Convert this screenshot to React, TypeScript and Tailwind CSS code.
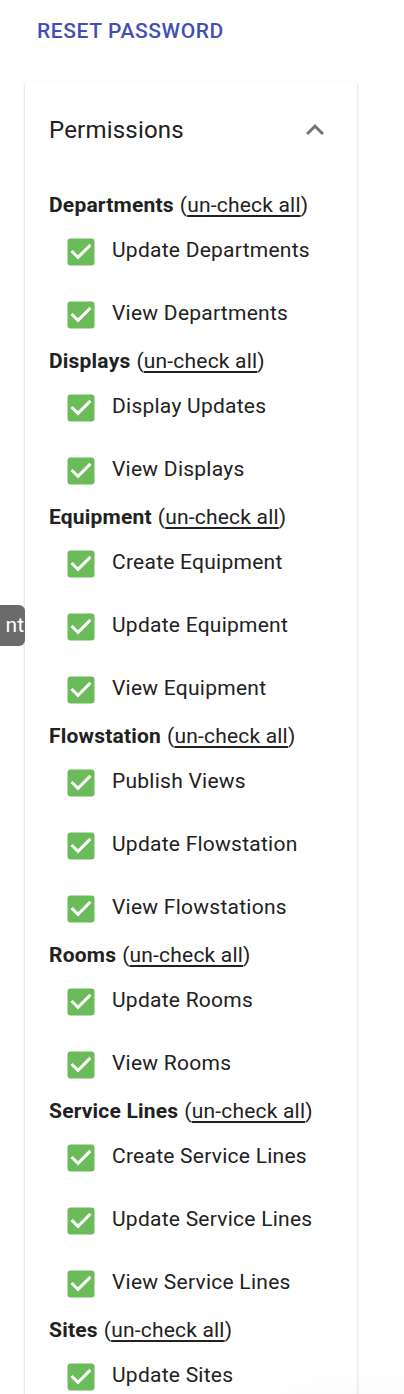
import React from "react";

interface Group {
  readonly name: string;
  readonly items: readonly string[];
}

const groups: Group[] = [
  { name: "Departments", items: ["Update Departments", "View Departments"] },
  { name: "Displays", items: ["Display Updates", "View Displays"] },
  { name: "Equipment", items: ["Create Equipment", "Update Equipment", "View Equipment"] },
  { name: "Flowstation", items: ["Publish Views", "Update Flowstation", "View Flowstations"] },
  { name: "Rooms", items: ["Update Rooms", "View Rooms"] },
  { name: "Service Lines", items: ["Create Service Lines", "Update Service Lines", "View Service Lines"] },
  { name: "Sites", items: ["Update Sites"] },
];

function CheckedBox() {
  return (
    <svg viewBox="0 0 24 24" className="h-[36px] w-[36px] shrink-0">
      <rect x="3" y="3" width="18" height="18" rx="2" fill="#6cbb5b" />
      <path d="M10 17l-5-5 1.41-1.41L10 14.17l7.59-7.59L19 8l-9 9z" fill="#ffffff" />
    </svg>
  );
}

export default function App() {
  return (
    <div className="relative min-h-[1394px] overflow-hidden bg-white font-['Roboto',sans-serif] text-[#212121]">
      <div className="flex h-[60px] items-center pl-[37px] pt-[3px]">
        <span className="text-[21px] font-medium uppercase tracking-[0.6px] text-[#3f51b5]">
          Reset password
        </span>
      </div>

      <div className="mt-[22px] flex">
        <div className="relative w-[25px]">
          <div className="absolute left-0 top-[523px] flex h-[41px] w-[25px] items-center justify-end rounded-r-[6px] bg-[#6b6b6b] pr-[1px] text-[21px] text-white">
            nt
          </div>
        </div>
        <div className="w-[332px] rounded-[3px] bg-white shadow-[0_1px_3px_rgba(0,0,0,0.2),0_1px_1px_rgba(0,0,0,0.14),0_2px_1px_-1px_rgba(0,0,0,0.12)]">
          <div className="flex h-[96px] items-center justify-between pl-[24px] pr-[24px]">
            <span className="text-[24px] tracking-[0.2px]">Permissions</span>
            <svg viewBox="0 0 24 24" className="h-[36px] w-[36px]">
              <path d="M12 8l-6 6 1.41 1.41L12 10.83l4.59 4.58L18 14z" fill="#757575" />
            </svg>
          </div>
          <div className="px-[24px] pt-[12px] pb-[24px]">
            {groups.map((g) => (
              <div key={g.name}>
                <div className="flex h-[30px] items-center pt-[2px] text-[21px] tracking-[0.2px]">
                  <span className="font-bold">{g.name}</span>
                  <span className="ml-[6px]">
                    (<span className="underline underline-offset-[3px]">un-check all</span>)
                  </span>
                </div>
                {g.items.map((item) => (
                  <div key={item} className="flex h-[63px] items-center">
                    <span className="ml-[13.5px]">
                      <CheckedBox />
                    </span>
                    <span className="-mt-[1px] ml-[13.5px] text-[21px] tracking-[0.25px]">{item}</span>
                  </div>
                ))}
              </div>
            ))}
          </div>
        </div>
      </div>

      <div className="absolute -bottom-[130px] -right-[80px] h-[160px] w-[240px] rounded-full bg-white shadow-[0_0_40px_rgba(0,0,0,0.05)]" />
    </div>
  );
}
